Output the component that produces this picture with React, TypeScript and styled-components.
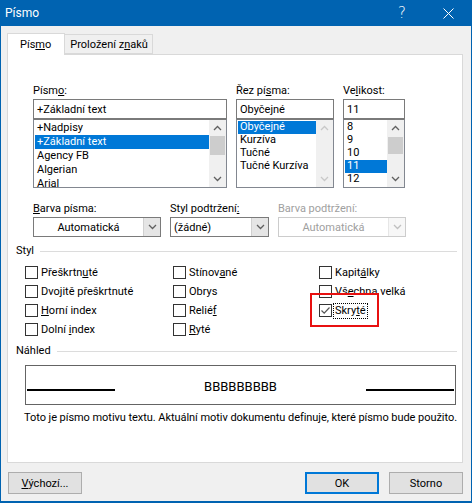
import styled, { createGlobalStyle } from 'styled-components';

const FONT = `Roboto, "Segoe UI", sans-serif`;

const GlobalStyle = createGlobalStyle`
  html, body {
    margin: 0;
    padding: 0;
    background: #ffffff;
  }
  body {
    font-family: ${FONT};
    font-size: 11px;
    color: #000;
  }
  * {
    box-sizing: border-box;
  }
`;

const fonts = ['+Nadpisy', '+Základní text', 'Agency FB', 'Algerian', 'Arial'];
const styles = ['Obyčejné', 'Kurzíva', 'Tučné', 'Tučné Kurzíva'];
const sizes = ['8', '9', '10', '11', '12'];

const Chevron = ({ up, color }: { up?: boolean; color: string }) => (
  <svg width="9" height="6" viewBox="0 0 9 6">
    <path
      d={up ? 'M1 5 L4.5 1.5 L8 5' : 'M1 1 L4.5 4.5 L8 1'}
      fill="none"
      stroke={color}
      strokeWidth="1.3"
    />
  </svg>
);

type ListProps = {
  items: string[];
  selected: number;
  rowHeight: number;
  disabled?: boolean;
  thumbTop?: number;
  thumbHeight?: number;
};

const List = ({ items, selected, rowHeight, disabled, thumbTop = 0, thumbHeight = 0 }: ListProps) => (
  <ListBox>
    <ListItems>
      {items.map((item, i) => (
        <ListRow key={item} $h={rowHeight} $sel={i === selected}>
          {item}
        </ListRow>
      ))}
    </ListItems>
    <ScrollBar>
      <ScrollArrow>
        <Chevron up color={disabled ? '#c8c8c8' : '#606060'} />
      </ScrollArrow>
      <ScrollTrack>{!disabled && <Thumb $top={thumbTop} $h={thumbHeight} />}</ScrollTrack>
      <ScrollArrow>
        <Chevron color={disabled ? '#c8c8c8' : '#606060'} />
      </ScrollArrow>
    </ScrollBar>
  </ListBox>
);

const Combo = ({
  text,
  width,
  center,
  disabled,
}: {
  text: string;
  width: number;
  center?: boolean;
  disabled?: boolean;
}) => (
  <ComboBox $w={width} $disabled={disabled}>
    <ComboText $center={center} $disabled={disabled}>
      {text}
    </ComboText>
    <ComboButton $disabled={disabled}>
      <Chevron color={disabled ? '#c0c0c0' : '#606060'} />
    </ComboButton>
  </ComboBox>
);

const Check = ({
  children,
  checked,
  focused,
  marked,
}: {
  children: React.ReactNode;
  checked?: boolean;
  focused?: boolean;
  marked?: boolean;
}) => (
  <CheckRow>
    <CheckBox>
      {checked && (
        <svg width="11" height="11" viewBox="0 0 11 11">
          <path d="M1.5 5.5 L4.2 8.2 L9.5 2.5" fill="none" stroke="#555" strokeWidth="1.2" />
        </svg>
      )}
    </CheckBox>
    <CheckLabel $focused={focused}>{children}</CheckLabel>
    {marked && <Highlight />}
  </CheckRow>
);

const App = () => {
  return (
    <>
      <GlobalStyle />
      <Window>
        <TitleBar>
          <TitleText>Písmo</TitleText>
          <TitleButton>
            <HelpGlyph>?</HelpGlyph>
          </TitleButton>
          <TitleButton>
            <svg width="11" height="11" viewBox="0 0 11 11">
              <path d="M0.5 0.5 L10.5 10.5 M10.5 0.5 L0.5 10.5" stroke="#fff" strokeWidth="1" />
            </svg>
          </TitleButton>
        </TitleBar>

        <Body>
          <TabBar>
            <Tab $active>
              Pís<u>m</u>o
            </Tab>
            <Tab>
              Proložení z<u>n</u>aků
            </Tab>
          </TabBar>

          <Panel>
            <TopRow>
              <Column $w={194}>
                <Label>
                  Písm<u>o</u>:
                </Label>
                <TextInput>+Základní text</TextInput>
                <List items={fonts} selected={1} rowHeight={14} thumbTop={0} thumbHeight={19} />
              </Column>
              <Column $w={98}>
                <Label>
                  Řez pí<u>s</u>ma:
                </Label>
                <TextInput>Obyčejné</TextInput>
                <List items={styles} selected={0} rowHeight={13} disabled />
              </Column>
              <Column $w={62}>
                <Label>
                  Ve<u>l</u>ikost:
                </Label>
                <TextInput>11</TextInput>
                <List items={sizes} selected={3} rowHeight={13} thumbTop={1} thumbHeight={17} />
              </Column>
            </TopRow>

            <ComboRow>
              <Column $w={128}>
                <Label>
                  <u>B</u>arva písma:
                </Label>
                <Combo text="Automatická" width={128} center />
              </Column>
              <Column $w={99}>
                <Label>
                  Styl podtržení<u>:</u>
                </Label>
                <Combo text="(žádné)" width={99} />
              </Column>
              <Column $w={128}>
                <Label $disabled>Barva podtržení:</Label>
                <Combo text="Automatická" width={128} center disabled />
              </Column>
            </ComboRow>

            <GroupHeader $top={7}>
              <span>Styl</span>
              <GroupLine />
            </GroupHeader>

            <CheckGrid>
              <Check>
                Přeškrtn<u>u</u>té
              </Check>
              <Check>
                Stínov<u>a</u>né
              </Check>
              <Check>
                Kapit<u>á</u>lky
              </Check>
              <Check>
                Dvo<u>j</u>itě přeškrtnuté
              </Check>
              <Check>Obrys</Check>
              <Check>
                Vš<u>e</u>chna velká
              </Check>
              <Check>
                <u>H</u>orní index
              </Check>
              <Check>
                Relié<u>f</u>
              </Check>
              <Check checked focused marked>
                Skry<u>t</u>é
              </Check>
              <Check>
                Dolní <u>i</u>ndex
              </Check>
              <Check>
                <u>R</u>yté
              </Check>
              <span />
            </CheckGrid>

            <GroupHeader $top={5}>
              <span>Náhled</span>
              <GroupLine />
            </GroupHeader>

            <Preview>
              <PreviewLine />
              <PreviewText>BBBBBBBBB</PreviewText>
              <PreviewLine />
            </Preview>

            <Caption>
              Toto je písmo motivu textu. Aktuální motiv dokumentu definuje, které písmo bude použito.
            </Caption>
          </Panel>

          <ButtonRow>
            <Button>
              <u>V</u>ýchozí...
            </Button>
            <ButtonGroup>
              <Button $primary>OK</Button>
              <Button>Storno</Button>
            </ButtonGroup>
          </ButtonRow>
        </Body>
      </Window>
    </>
  );
};

export default App;

const Window = styled.div`
  width: 472px;
  height: 503px;
  display: flex;
  flex-direction: column;
  background: #f0f0f0;
  border: 1px solid #0063b1;
  border-top: none;
  border-bottom-width: 2px;
`;

const TitleBar = styled.div`
  height: 26px;
  display: flex;
  align-items: center;
  background: #0063b1;
  color: #ffffff;
  padding-left: 4px;
`;

const TitleText = styled.div`
  flex: 1;
  font-size: 12px;
`;

const TitleButton = styled.div`
  width: 46px;
  height: 26px;
  display: flex;
  align-items: center;
  justify-content: center;
`;

const HelpGlyph = styled.span`
  font-family: "DejaVu Sans", sans-serif;
  font-size: 15px;
  font-weight: 300;
`;

const Body = styled.div`
  flex: 1;
  display: flex;
  flex-direction: column;
  padding: 7px 8px 0 6px;
`;

const TabBar = styled.div`
  height: 21px;
  display: flex;
  align-items: flex-end;
`;

const Tab = styled.div<{ $active?: boolean }>`
  height: ${(p) => (p.$active ? '22px' : '20px')};
  margin-bottom: ${(p) => (p.$active ? '-1px' : '0')};
  padding: ${(p) => (p.$active ? '0 13px 0 12px' : '0 4px 0 5px')};
  display: flex;
  align-items: center;
  background: ${(p) => (p.$active ? '#ffffff' : '#f0f0f0')};
  border: 1px solid #d9d9d9;
  border-bottom: ${(p) => (p.$active ? 'none' : '1px solid #d9d9d9')};
  border-left: ${(p) => (p.$active ? '1px solid #d9d9d9' : 'none')};
  position: relative;
  z-index: ${(p) => (p.$active ? 1 : 0)};
`;

const Panel = styled.div`
  height: 409px;
  display: flex;
  flex-direction: column;
  background: #ffffff;
  border: 1px solid #d9d9d9;
`;

const TopRow = styled.div`
  display: flex;
  gap: 9px;
  margin-top: 29px;
  padding-left: 25px;
`;

const ComboRow = styled.div`
  display: flex;
  gap: 9px;
  margin-top: 14px;
  padding-left: 25px;
`;

const Column = styled.div<{ $w: number }>`
  width: ${(p) => p.$w}px;
  display: flex;
  flex-direction: column;
`;

const Label = styled.div<{ $disabled?: boolean }>`
  height: 15px;
  line-height: 14px;
  color: ${(p) => (p.$disabled ? '#a0a0a0' : '#000000')};
  white-space: nowrap;
`;

const TextInput = styled.div`
  height: 20px;
  display: flex;
  align-items: center;
  padding-left: 3px;
  border: 1px solid #7a7a7a;
  white-space: nowrap;
  overflow: hidden;
`;

const ListBox = styled.div`
  height: 69px;
  display: flex;
  border: 1px solid #828790;
  border-top-color: #7a7a7a;
`;

const ListItems = styled.div`
  flex: 1;
  padding: 1px 0 0 1px;
  overflow: hidden;
`;

const ListRow = styled.div<{ $h: number; $sel?: boolean }>`
  height: ${(p) => p.$h}px;
  line-height: ${(p) => p.$h - 1}px;
  padding-left: 2px;
  white-space: nowrap;
  background: ${(p) => (p.$sel ? '#0078d7' : 'transparent')};
  color: ${(p) => (p.$sel ? '#ffffff' : '#000000')};
`;

const ScrollBar = styled.div`
  width: 17px;
  display: flex;
  flex-direction: column;
  background: #f0f0f0;
`;

const ScrollArrow = styled.div`
  height: 16px;
  display: flex;
  align-items: center;
  justify-content: center;
`;

const ScrollTrack = styled.div`
  flex: 1;
  display: flex;
  flex-direction: column;
`;

const Thumb = styled.div<{ $top: number; $h: number }>`
  margin: ${(p) => p.$top}px 1px 0;
  height: ${(p) => p.$h}px;
  background: #cdcdcd;
`;

const ComboBox = styled.div<{ $w: number; $disabled?: boolean }>`
  width: ${(p) => p.$w}px;
  height: 20px;
  display: flex;
  border: 1px solid ${(p) => (p.$disabled ? '#cccccc' : '#7a7a7a')};
  background: #ffffff;
`;

const ComboText = styled.div<{ $center?: boolean; $disabled?: boolean }>`
  flex: 1;
  display: flex;
  align-items: center;
  justify-content: ${(p) => (p.$center ? 'center' : 'flex-start')};
  padding-left: ${(p) => (p.$center ? '0' : '3px')};
  color: ${(p) => (p.$disabled ? '#a0a0a0' : '#000000')};
  white-space: nowrap;
`;

const ComboButton = styled.div<{ $disabled?: boolean }>`
  width: 17px;
  display: flex;
  align-items: center;
  justify-content: center;
  background: ${(p) => (p.$disabled ? '#f7f7f7' : '#e5e5e5')};
  border-left: 1px solid ${(p) => (p.$disabled ? '#e6e6e6' : '#d0d0d0')};
`;

const GroupHeader = styled.div<{ $top: number }>`
  height: 14px;
  margin-top: ${(p) => p.$top}px;
  display: flex;
  align-items: center;
  gap: 6px;
  padding: 0 5px 0 8px;
  line-height: 14px;
`;

const GroupLine = styled.div`
  flex: 1;
  height: 1px;
  background: #dcdcdc;
`;

const CheckGrid = styled.div`
  margin-top: 5px;
  padding-left: 17px;
  display: grid;
  grid-template-columns: 148px 146px 1fr;
  grid-auto-rows: 19px;
`;

const CheckRow = styled.div`
  position: relative;
  display: flex;
  align-items: center;
  white-space: nowrap;
`;

const CheckBox = styled.div`
  width: 13px;
  height: 13px;
  margin-right: 2px;
  display: flex;
  align-items: center;
  justify-content: center;
  border: 1px solid #333333;
  background: #ffffff;
`;

const CheckLabel = styled.span<{ $focused?: boolean }>`
  padding: 0 1px;
  line-height: 14px;
  outline: ${(p) => (p.$focused ? '1px dotted #000000' : 'none')};
`;

const Highlight = styled.div`
  position: absolute;
  left: -9px;
  top: -8px;
  width: 69px;
  height: 34px;
  border: 2px solid #e81010;
  pointer-events: none;
`;

const Preview = styled.div`
  margin: 7px 0 0 17px;
  width: 431px;
  height: 40px;
  display: flex;
  align-items: flex-end;
  padding: 0 1px 13px;
  border: 1px solid #646464;
`;

const PreviewLine = styled.div`
  width: 88px;
  height: 2px;
  background: #000000;
`;

const PreviewText = styled.div`
  flex: 1;
  text-align: center;
  font-size: 13px;
  line-height: 14px;
  margin-bottom: -3px;
`;

const Caption = styled.div`
  margin-top: 6px;
  padding-left: 16px;
  line-height: 14px;
  letter-spacing: -0.05px;
  white-space: nowrap;
`;

const ButtonRow = styled.div`
  margin-top: 9px;
  display: flex;
  justify-content: space-between;
  padding-left: 1px;
`;

const ButtonGroup = styled.div`
  display: flex;
  gap: 10px;
`;

const Button = styled.div<{ $primary?: boolean }>`
  width: 74px;
  height: 22px;
  display: flex;
  align-items: center;
  justify-content: center;
  background: #e1e1e1;
  border: ${(p) => (p.$primary ? '2px solid #0078d7' : '1px solid #adadad')};
`;
